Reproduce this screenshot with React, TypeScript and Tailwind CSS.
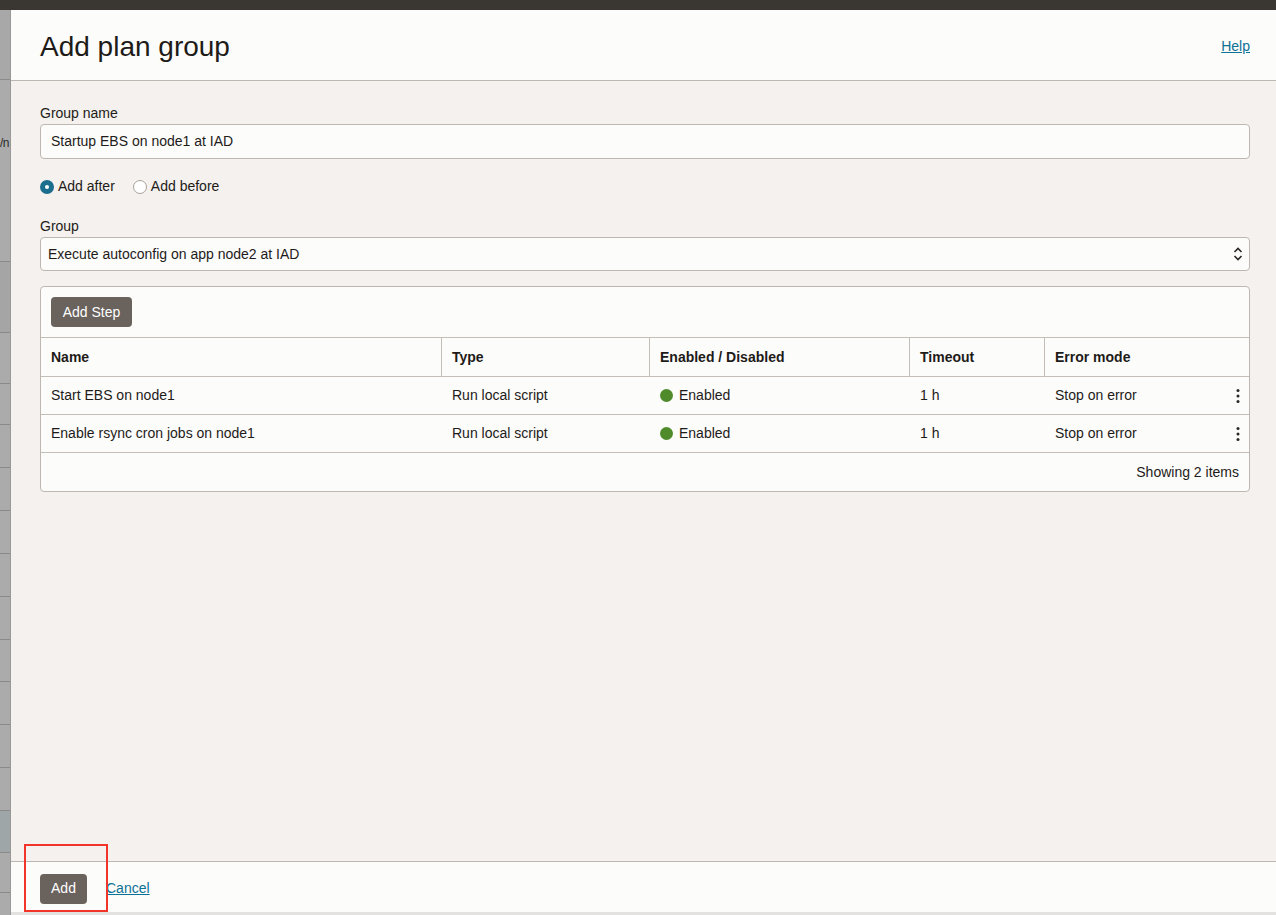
import React from "react";

const rows = [
  { name: "Start EBS on node1", type: "Run local script", timeout: "1 h", mode: "Stop on error" },
  { name: "Enable rsync cron jobs on node1", type: "Run local script", timeout: "1 h", mode: "Stop on error" },
];

const cols = ["w-[401px]", "w-[208px]", "w-[260px]", "w-[135px]", "flex-1"];

// background page strip peeking out at the left edge
const stripRows = [182, 71, 51, 41, 43, 43, 43, 43, 43, 42, 43, 43, 43, 42, 40];

function Kebab() {
  return (
    <svg className="h-4 w-1" viewBox="0 0 4 16" fill="#2b2723">
      <circle cx="2" cy="2.5" r="1.5" />
      <circle cx="2" cy="8" r="1.5" />
      <circle cx="2" cy="13.5" r="1.5" />
    </svg>
  );
}

export default function App() {
  return (
    <div className="relative flex h-[915px] w-[1276px] flex-col overflow-hidden bg-[#f4f1ee] font-['Liberation_Sans',Arial,sans-serif] text-[14px] text-[#1e1b18]">
      <div className="h-[10px] shrink-0 bg-[#3a3632]" />
      <div className="flex flex-1">
        {/* Left strip */}
        <div className="flex w-[11px] shrink-0 flex-col overflow-hidden border-r border-[#9a9896] bg-[#ababab]">
          <div className="h-[70px] border-b border-[#8c8a88] bg-[#a8a8a8]" />
          {stripRows.map((h, i) => (
            <div
              key={i}
              style={{ height: h }}
              className={`border-b border-[#8c8a88] ${i === 0 ? "flex items-start pt-[57px]" : ""} ${i === 1 ? "bg-[#a5a5a5]" : ""} ${i === 13 ? "bg-[#9ea6a8]" : ""}`}
            >
              {i === 0 && <span className="text-[12px] leading-none tracking-[-0.5px] text-[#2a2a2a]">/n</span>}
            </div>
          ))}
          <div className="flex-1" />
        </div>

        {/* Panel */}
        <div className="flex flex-1 flex-col">
          <header className="flex h-[71px] shrink-0 items-center justify-between border-b border-[#bdb7b2] bg-[#fcfcfb] pl-[29px] pr-[26px] pt-[3px]">
            <h1 className="text-[28px] leading-none text-[#1e1b18]">Add plan group</h1>
            <a href="#" className="text-[14px] text-[#0c7194] underline">
              Help
            </a>
          </header>

          <div className="flex-1 pl-[29px] pr-[26px] pt-[23px]">
            <label className="mb-[2px] block leading-[18px]">Group name</label>
            <div className="flex h-[35px] items-center rounded-[4px] border border-[#bdb7b2] bg-[#fcfcfb] px-[10px]">
              Startup EBS on node1 at IAD
            </div>

            <div className="mt-[17px] flex items-center gap-[4px]">
              <span className="flex h-[14px] w-[14px] items-center justify-center rounded-full bg-[#1c6e8f]">
                <span className="h-[4px] w-[4px] rounded-full bg-white" />
              </span>
              <span>Add after</span>
              <span className="ml-[14px] h-[14px] w-[14px] rounded-full border border-[#a9a39e] bg-white" />
              <span>Add before</span>
            </div>

            <label className="mb-[2px] mt-[20px] block leading-[18px]">Group</label>
            <div className="flex h-[34px] items-center justify-between rounded-[4px] border border-[#bdb7b2] bg-[#fcfcfb] pl-[7px] pr-[6px]">
              <span>Execute autoconfig on app node2 at IAD</span>
              <svg className="h-[16px] w-[10px]" viewBox="0 0 10 16" fill="none" stroke="#2b2723" strokeWidth="1.6">
                <path d="M1.5 6 5 2.5 8.5 6" />
                <path d="M1.5 10 5 13.5 8.5 10" />
              </svg>
            </div>

            {/* Steps table */}
            <div className="mt-[15px] rounded-[4px] border border-[#bdb7b2] bg-[#fcfcfb]">
              <div className="border-b border-[#c4beb9] px-[10px] pb-[10px] pt-[10px]">
                <button className="h-[30px] w-[81px] rounded-[4px] bg-[#6a625d] text-[14px] text-white">
                  Add Step
                </button>
              </div>
              <div className="flex h-[39px] items-center border-b border-[#c4beb9] font-bold">
                {["Name", "Type", "Enabled / Disabled", "Timeout", "Error mode"].map((h, i) => (
                  <div
                    key={h}
                    className={`${cols[i]} flex h-full items-center px-[10px] ${i < 4 ? "border-r border-[#c4beb9]" : ""}`}
                  >
                    {h}
                  </div>
                ))}
              </div>
              {rows.map((r) => (
                <div key={r.name} className="flex h-[38px] items-center border-b border-[#c4beb9]">
                  <div className={`${cols[0]} px-[10px]`}>{r.name}</div>
                  <div className={`${cols[1]} px-[10px]`}>{r.type}</div>
                  <div className={`${cols[2]} flex items-center gap-[6px] px-[10px]`}>
                    <span className="h-[13px] w-[13px] rounded-full bg-[#4f8a2b]" />
                    Enabled
                  </div>
                  <div className={`${cols[3]} px-[10px]`}>{r.timeout}</div>
                  <div className={`${cols[4]} flex items-center justify-between pl-[10px] pr-[9px]`}>
                    {r.mode}
                    <Kebab />
                  </div>
                </div>
              ))}
              <div className="flex h-[38px] items-center justify-end px-[10px]">Showing 2 items</div>
            </div>
          </div>

          <footer className="flex h-[51px] shrink-0 items-center gap-[19px] border-t border-[#bdb7b2] bg-[#fcfcfb] pl-[29px] pt-[3px]">
            <button className="h-[30px] w-[47px] rounded-[4px] bg-[#6a625d] text-[14px] text-white">Add</button>
            <a href="#" className="text-[#0c7194] underline">
              Cancel
            </a>
          </footer>
          <div className="h-[3px] shrink-0 bg-[#e4e2e0]" />
        </div>
      </div>

      {/* Highlight annotation */}
      <div className="pointer-events-none absolute left-[24px] top-[844px] h-[68px] w-[84px] border-2 border-[#f2352b]" />
    </div>
  );
}
